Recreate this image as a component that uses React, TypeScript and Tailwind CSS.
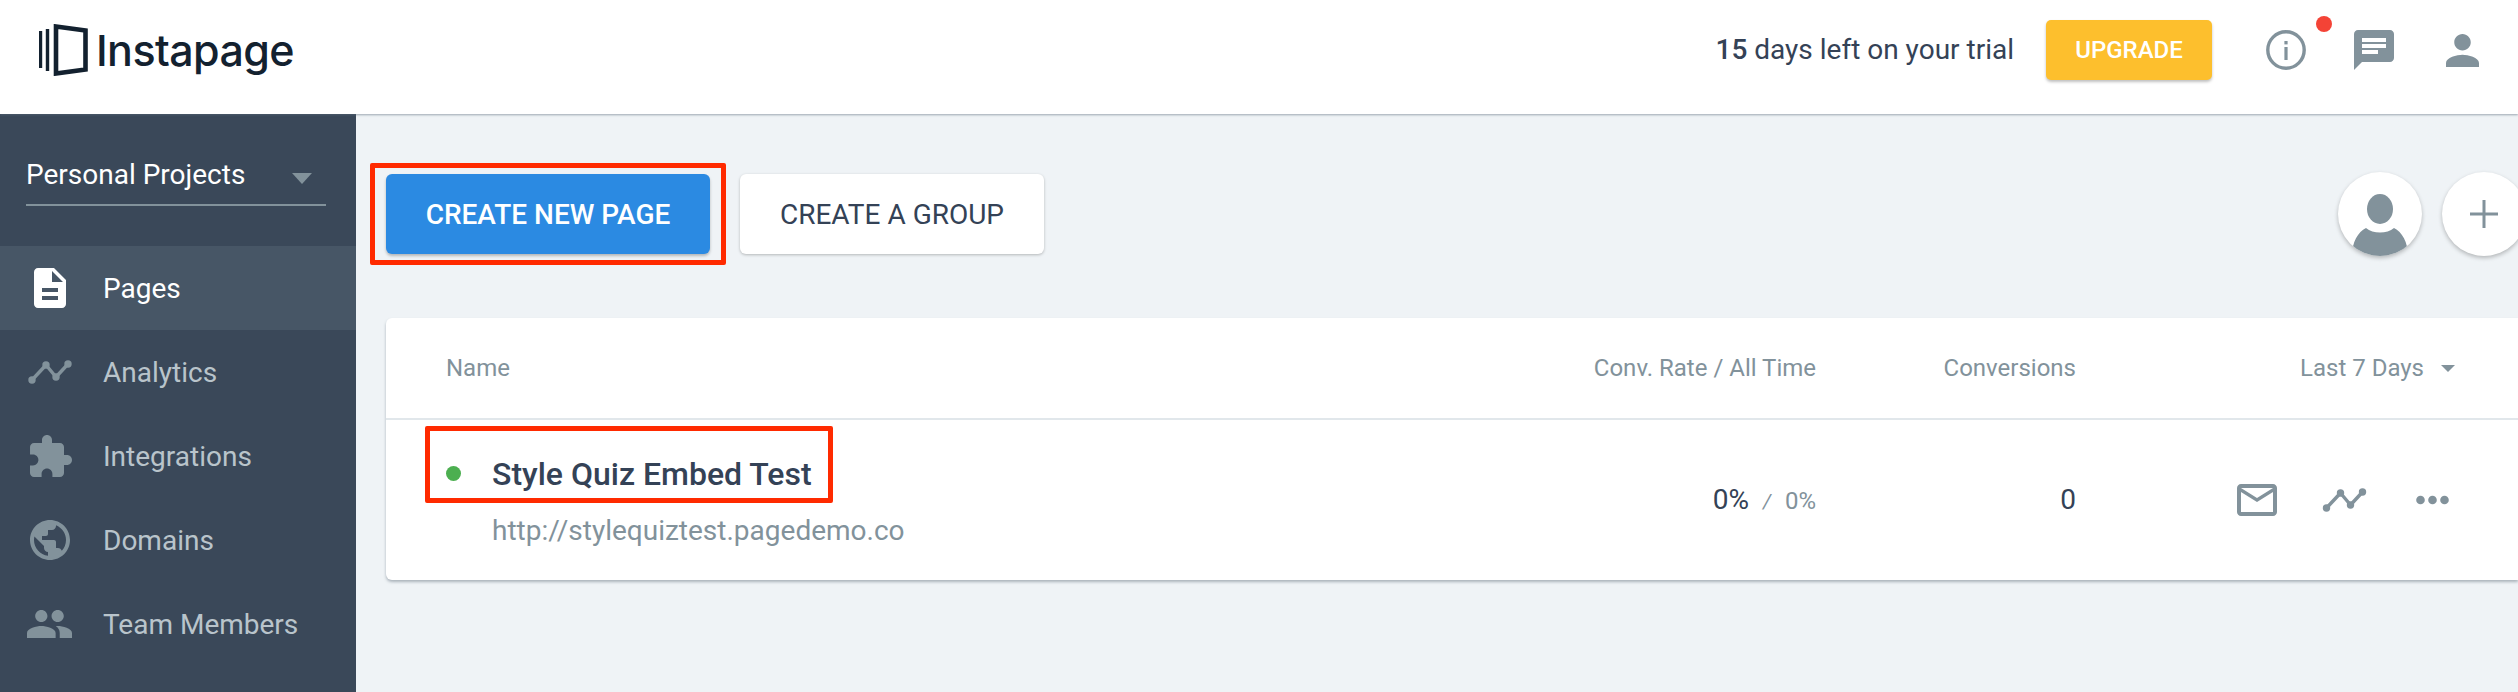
const NAV = [
  { label: 'Pages', icon: 'pages', active: true },
  { label: 'Analytics', icon: 'analytics' },
  { label: 'Integrations', icon: 'puzzle' },
  { label: 'Domains', icon: 'globe' },
  { label: 'Team Members', icon: 'team' },
]

function NavIcon({ name, active }: { name: string; active?: boolean }) {
  const fill = active ? '#ffffff' : '#82929b'
  if (name === 'pages')
    return (
      <svg viewBox="4 2 16 20" className="ml-[34px] h-[40px] w-[32px]" fill={fill}>
        <path d="M14 2H6c-1.1 0-1.99.9-1.99 2L4 20c0 1.1.89 2 1.99 2H18c1.1 0 2-.9 2-2V8l-6-6zm2 16H8v-2h8v2zm0-4H8v-2h8v2zm-3-5V3.5L18.5 9H13z" />
      </svg>
    )
  if (name === 'analytics') return <TrendIcon className="ml-[27px] h-[24px] w-[45px]" />
  if (name === 'puzzle')
    return (
      <svg viewBox="2 1 21 21" className="ml-[30px] h-[42px] w-[42px]" fill={fill}>
        <path d="M20.5 11H19V7c0-1.1-.9-2-2-2h-4V3.5C13 2.12 11.88 1 10.5 1S8 2.12 8 3.5V5H4c-1.1 0-1.99.9-1.99 2v3.8H3.5c1.49 0 2.7 1.21 2.7 2.7s-1.21 2.7-2.7 2.7H2V20c0 1.1.9 2 2 2h3.8v-1.5c0-1.49 1.21-2.7 2.7-2.7 1.49 0 2.7 1.21 2.7 2.7V22H17c1.1 0 2-.9 2-2v-4h1.5c1.38 0 2.5-1.12 2.5-2.5S21.88 11 20.5 11z" />
      </svg>
    )
  if (name === 'globe')
    return (
      <svg viewBox="2 2 20 20" className="ml-[30px] h-[40px] w-[40px]" fill={fill}>
        <path d="M12 2C6.48 2 2 6.48 2 12s4.48 10 10 10 10-4.48 10-10S17.52 2 12 2zm-1 17.93c-3.95-.49-7-3.85-7-7.93 0-.62.08-1.21.21-1.79L9 15v1c0 1.1.9 2 2 2v1.93zm6.9-2.54c-.26-.81-1-1.39-1.9-1.39h-1v-3c0-.55-.45-1-1-1H8v-2h2c.55 0 1-.45 1-1V7h2c1.1 0 2-.9 2-2v-.41c2.93 1.19 5 4.06 5 7.41 0 2.08-.8 3.97-2.1 5.39z" />
      </svg>
    )
  return (
    <svg viewBox="1 5 22 14" className="ml-[27px] h-[28px] w-[45px]" fill={fill} preserveAspectRatio="none">
      <path d="M16 11c1.66 0 2.99-1.34 2.99-3S17.66 5 16 5c-1.66 0-3 1.34-3 3s1.34 3 3 3zm-8 0c1.66 0 2.99-1.34 2.99-3S9.66 5 8 5C6.34 5 5 6.34 5 8s1.34 3 3 3zm0 2c-2.33 0-7 1.17-7 3.5V19h14v-2.5c0-2.33-4.67-3.5-7-3.5zm8 0c-.29 0-.62.02-.97.05 1.16.84 1.97 1.97 1.97 3.45V19h6v-2.5c0-2.33-4.67-3.5-7-3.5z" />
    </svg>
  )
}

function TrendIcon({ className }: { className: string }) {
  return (
    <svg viewBox="0 0 45 24" className={className} fill="#82929b" stroke="none">
      <path d="M5 20 L19 5 L29 17 L41 4" fill="none" stroke="#82929b" strokeWidth="3.4" strokeLinejoin="round" />
      <circle cx="5" cy="20" r="3.7" />
      <circle cx="19" cy="5" r="3.7" />
      <circle cx="29" cy="17" r="3.7" />
      <circle cx="41" cy="4" r="3.7" />
    </svg>
  )
}

function Logo() {
  return (
    <div className="ml-[39px] flex items-center">
      <svg viewBox="0 0 49 52" className="h-[52px] w-[49px]" fill="none" stroke="#13212f">
        <path d="M1.5 7 V44 M8.5 5 V47" strokeWidth="3.4" />
        <path d="M17 2.5 L46.5 6.5 V45.5 L17 49.5 Z" strokeWidth="4.6" />
      </svg>
      <span className="ml-[8px] font-['Inter',sans-serif] text-[43px] font-medium leading-none tracking-[-0.6px] text-[#13212f]">Instapage</span>
    </div>
  )
}

export default function App() {
  return (
    <div className="flex h-[692px] w-[2518px] flex-col overflow-hidden bg-[#eff3f6] font-['Roboto',sans-serif]">
      <header className="relative z-10 flex h-[114px] shrink-0 items-center bg-white pb-[14px] shadow-[0_1px_2px_rgba(90,105,120,0.55)]">
        <Logo />
        <div className="ml-auto flex items-center">
          <span className="text-[28px] text-[#344256]">
            <span className="font-medium">15</span> days left on your trial
          </span>
          <button className="ml-[32px] h-[60px] w-[166px] rounded-[5px] bg-[#fdbf2d] text-[24px] font-medium text-white shadow-[0_2px_3px_rgba(0,0,0,0.25)]">
            UPGRADE
          </button>
          <div className="relative ml-[54px] h-[40px] w-[40px]">
            <svg viewBox="0 0 40 40" className="h-[40px] w-[40px]">
              <circle cx="20" cy="20" r="18.2" fill="none" stroke="#82929b" strokeWidth="3.4" />
              <rect x="18.4" y="17" width="3.2" height="13" fill="#82929b" />
              <rect x="18.4" y="11" width="3.2" height="3.4" fill="#82929b" />
            </svg>
            <span className="absolute left-[50px] top-[-14px] h-[16px] w-[16px] rounded-full bg-[#f44336]" />
          </div>
          <svg viewBox="2 2 20 20" className="ml-[48px] h-[40px] w-[40px]" fill="#82929b">
            <path d="M20 2H4c-1.1 0-1.99.9-1.99 2L2 22l4-4h14c1.1 0 2-.9 2-2V4c0-1.1-.9-2-2-2zM6 9h12v2H6V9zm8 5H6v-2h8v2zm4-6H6V6h12v2z" />
          </svg>
          <svg viewBox="4 4 16 16" className="ml-[52px] mr-[39px] h-[33px] w-[33px]" fill="#82929b">
            <path d="M12 12c2.21 0 4-1.79 4-4s-1.79-4-4-4-4 1.79-4 4 1.79 4 4 4zm0 2c-2.67 0-8 1.34-8 4v2h16v-2c0-2.66-5.33-4-8-4z" />
          </svg>
        </div>
      </header>

      <div className="flex min-h-0 flex-1">
        <aside className="w-[356px] shrink-0 bg-[#3a4859]">
          <div className="mx-[26px] mt-[40px] flex h-[52px] w-[300px] items-center justify-between border-b-2 border-[#82929b] pb-[9px] pr-[14px]">
            <span className="text-[28px] text-white">Personal Projects</span>
            <span className="mt-[8px] h-0 w-0 border-x-[10px] border-t-[11px] border-x-transparent border-t-[#82929b]" />
          </div>
          <nav className="mt-[40px]">
            {NAV.map((item) => (
              <div key={item.label} className={`relative flex h-[84px] items-center ${item.active ? 'bg-[#475666]' : ''}`}>
                <div className="flex w-[103px] shrink-0 items-center">
                  <NavIcon name={item.icon} active={item.active} />
                </div>
                <span className={`pt-[1px] text-[28px] ${item.active ? 'text-white' : 'text-[#b9c4cb]'}`}>{item.label}</span>
              </div>
            ))}
          </nav>
        </aside>

        <main className="min-w-0 flex-1 pt-[49px]">
          <div className="flex items-center pl-[14px]">
            <div className="rounded-[2px] border-[5px] border-[#ff2a00] px-[11px] py-[6px]">
              <button className="h-[80px] w-[324px] rounded-[6px] bg-[#2b8ae2] pt-[1px] text-[28px] font-medium text-white shadow-[0_2px_3px_rgba(0,0,0,0.25)]">
                CREATE NEW PAGE
              </button>
            </div>
            <button className="ml-[14px] h-[80px] w-[304px] rounded-[6px] bg-white pt-[1px] text-[28px] text-[#344256] shadow-[0_1px_3px_rgba(0,0,0,0.25)]">
              CREATE A GROUP
            </button>
            <div className="ml-auto mr-[-8px] flex gap-[20px]">
              <div className="flex h-[84px] w-[84px] items-end justify-center overflow-hidden rounded-full bg-white shadow-[0_2px_4px_rgba(0,0,0,0.25)]">
                <svg viewBox="0 0 84 84" className="h-[84px] w-[84px]" fill="#82929b">
                  <ellipse cx="42" cy="37" rx="13" ry="15" />
                  <path d="M14 84 C14 70 20 60 28 56 C35 62 49 62 56 56 C64 60 70 70 70 84 Z" />
                </svg>
              </div>
              <div className="flex h-[84px] w-[84px] items-center justify-center rounded-full bg-white shadow-[0_2px_4px_rgba(0,0,0,0.25)]">
                <svg viewBox="0 0 28 28" className="h-[28px] w-[28px]" stroke="#82929b" strokeWidth="3">
                  <path d="M14 0 V28 M0 14 H28" />
                </svg>
              </div>
            </div>
          </div>

          <section className="ml-[30px] mt-[53px] rounded-l-[6px] bg-white shadow-[0_2px_3px_rgba(70,85,100,0.4)]">
            <div className="flex h-[102px] items-center border-b-2 border-[#e1e7eb] text-[24px] text-[#82929b]">
              <span className="ml-[60px]">Name</span>
              <span className="ml-auto">Conv. Rate / All Time</span>
              <span className="w-[260px] text-right">Conversions</span>
              <span className="flex w-[442px] items-center justify-end pr-[63px]">
                Last 7 Days
                <span className="ml-[17px] h-0 w-0 border-x-[7px] border-t-[7px] border-x-transparent border-t-[#82929b]" />
              </span>
            </div>
            <div className="flex h-[160px] items-start">
              <div className="ml-[39px] mt-[6px] min-w-0">
                <div className="flex h-[77px] w-[408px] items-center rounded-[2px] border-[5px] border-[#ff2a00] pl-[16px] pt-[18px]">
                  <span className="h-[15px] w-[15px] rounded-full bg-[#4caf50]" />
                  <span className="ml-[31px] text-[32px] font-medium text-[#344256]">Style Quiz Embed Test</span>
                </div>
                <div className="ml-[67px] mt-[7px] text-[28px] text-[#82929b]">http://stylequiztest.pagedemo.co</div>
              </div>
              <div className="ml-auto flex h-full items-center">
                <span className="text-[28px] text-[#344256]">0%</span>
                <span className="ml-[14px] mt-[2px] text-[20px] italic text-[#82929b]">/</span>
                <span className="ml-[14px] mt-[2px] text-[24px] text-[#82929b]">0%</span>
                <span className="w-[260px] text-right text-[28px] text-[#344256]">0</span>
                <div className="flex w-[442px] items-center justify-end pr-[69px]">
                  <svg viewBox="2 4 20 16" className="h-[32px] w-[40px]" fill="#82929b">
                    <path d="M20 4H4c-1.1 0-1.99.9-1.99 2L2 18c0 1.1.9 2 2 2h16c1.1 0 2-.9 2-2V6c0-1.1-.9-2-2-2zm0 14H4V8l8 5 8-5v10zm-8-7L4 6h16l-8 5z" />
                  </svg>
                  <TrendIcon className="ml-[44px] h-[24px] w-[46px]" />
                  <svg viewBox="0 0 33 10" className="ml-[49px] h-[10px] w-[33px]" fill="#82929b">
                    <circle cx="4.5" cy="5" r="4.3" />
                    <circle cx="16.5" cy="5" r="4.3" />
                    <circle cx="28.5" cy="5" r="4.3" />
                  </svg>
                </div>
              </div>
            </div>
          </section>
        </main>
      </div>
    </div>
  )
}
